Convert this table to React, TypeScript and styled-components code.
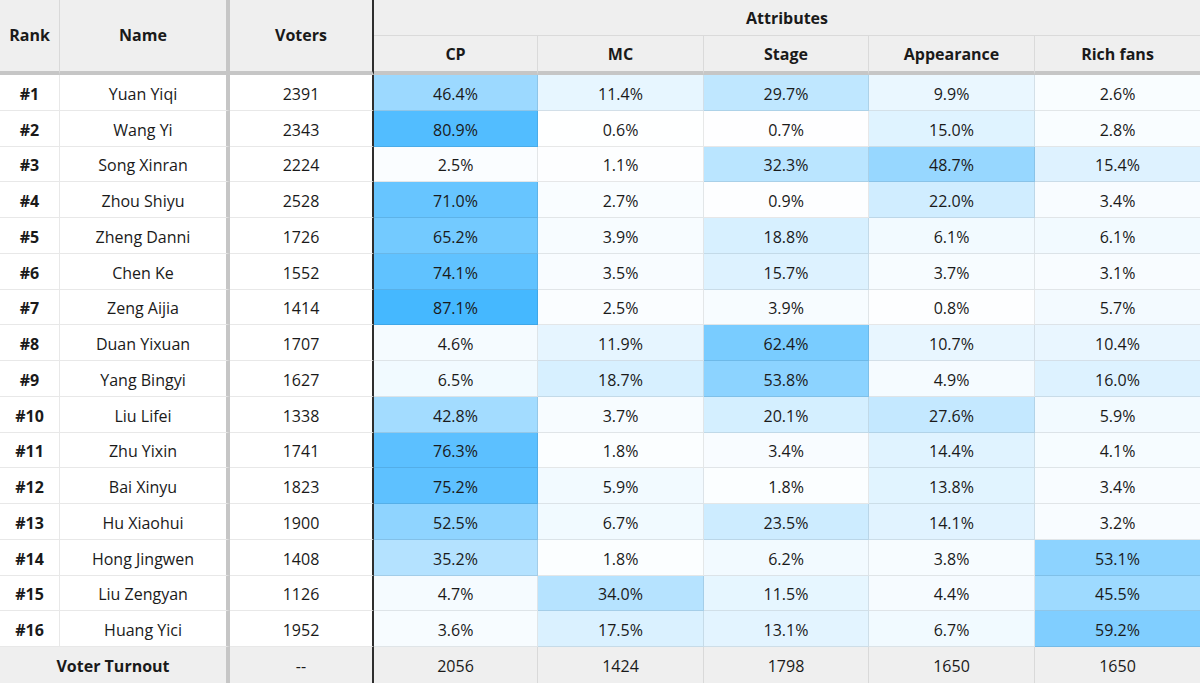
import React from "react";
import styled, { createGlobalStyle, css } from "styled-components";

const GlobalStyle = createGlobalStyle`
  html, body {
    margin: 0;
    padding: 0;
    background: #ffffff;
  }
  body {
    font-family: "Open Sans", "Noto Sans", "Liberation Sans", sans-serif;
    color: #1a1a1a;
  }
`;

const ROW_H = 35.75;

const Grid = styled.div`
  display: grid;
  width: 1200px;
  height: 683px;
  grid-template-columns: 60px 170px 144px 164px 166px 165px 166px 165px;
  grid-template-rows: 36px 39px repeat(16, ${ROW_H}px) 36px;
  font-size: 16px;
  overflow: hidden;
`;

type Edge = "thin" | "thick" | "dark" | "none";

const edgeRight = (e?: Edge) => {
  switch (e) {
    case "thick":
      return css`border-right: 4px solid #c6c6c6;`;
    case "dark":
      return css`border-right: 2px solid #2e2e2e;`;
    case "none":
      return css`border-right: none;`;
    default:
      return css`border-right: 1px solid rgba(0, 0, 0, 0.09);`;
  }
};

const Cell = styled.div<{ $edge?: Edge; $pct?: number }>`
  display: flex;
  align-items: center;
  justify-content: center;
  box-sizing: border-box;
  padding-top: 3px;
  border-bottom: 1px solid rgba(0, 0, 0, 0.09);
  white-space: nowrap;
  ${(p) => edgeRight(p.$edge)}
  ${(p) =>
    p.$pct !== undefined &&
    css`
      background: rgb(
        ${Math.round(255 - (p.$pct / 100) * 214)},
        ${Math.round(255 - (p.$pct / 100) * 82)},
        255
      );
    `}
`;

const HeadCell = styled(Cell)<{ $span?: number; $rows?: number }>`
  background: #efefef;
  font-weight: 700;
  padding-top: 0;
  border-bottom-color: #dadada;
  ${(p) => p.$span && css`grid-column: span ${p.$span};`}
  ${(p) =>
    p.$rows &&
    css`
      grid-row: span ${p.$rows};
    `}
`;

const SubHead = styled(HeadCell)`
  border-bottom: 4px solid #c6c6c6;
  border-right-color: #dadada;
`;

const MainHead = styled(HeadCell)`
  border-bottom: 4px solid #c6c6c6;
  padding-bottom: 2px;
`;

const RankCell = styled(Cell)`
  font-weight: 700;
`;

const Foot = styled(Cell)<{ $span?: number }>`
  background: #efefef;
  border-bottom: none;
  padding-top: 1px;
  ${(p) => p.$span && css`grid-column: span ${p.$span};`}
`;

const FootLabel = styled(Foot)`
  font-weight: 700;
`;

type Row = [string, number, number, number, number, number, number];

const rows: Row[] = [
  ["Yuan Yiqi", 2391, 46.4, 11.4, 29.7, 9.9, 2.6],
  ["Wang Yi", 2343, 80.9, 0.6, 0.7, 15.0, 2.8],
  ["Song Xinran", 2224, 2.5, 1.1, 32.3, 48.7, 15.4],
  ["Zhou Shiyu", 2528, 71.0, 2.7, 0.9, 22.0, 3.4],
  ["Zheng Danni", 1726, 65.2, 3.9, 18.8, 6.1, 6.1],
  ["Chen Ke", 1552, 74.1, 3.5, 15.7, 3.7, 3.1],
  ["Zeng Aijia", 1414, 87.1, 2.5, 3.9, 0.8, 5.7],
  ["Duan Yixuan", 1707, 4.6, 11.9, 62.4, 10.7, 10.4],
  ["Yang Bingyi", 1627, 6.5, 18.7, 53.8, 4.9, 16.0],
  ["Liu Lifei", 1338, 42.8, 3.7, 20.1, 27.6, 5.9],
  ["Zhu Yixin", 1741, 76.3, 1.8, 3.4, 14.4, 4.1],
  ["Bai Xinyu", 1823, 75.2, 5.9, 1.8, 13.8, 3.4],
  ["Hu Xiaohui", 1900, 52.5, 6.7, 23.5, 14.1, 3.2],
  ["Hong Jingwen", 1408, 35.2, 1.8, 6.2, 3.8, 53.1],
  ["Liu Zengyan", 1126, 4.7, 34.0, 11.5, 4.4, 45.5],
  ["Huang Yici", 1952, 3.6, 17.5, 13.1, 6.7, 59.2],
];

const attributes = ["CP", "MC", "Stage", "Appearance", "Rich fans"];
const turnout = [2056, 1424, 1798, 1650, 1650];

const App: React.FC = () => {
  return (
    <>
      <GlobalStyle />
      <Grid>
        <MainHead $rows={2}>Rank</MainHead>
        <MainHead $rows={2} $edge="thick">
          Name
        </MainHead>
        <MainHead $rows={2} $edge="dark">
          Voters
        </MainHead>
        <HeadCell $span={5} $edge="none">
          Attributes
        </HeadCell>
        {attributes.map((a, i) => (
          <SubHead key={a} $edge={i === attributes.length - 1 ? "none" : "thin"}>
            {a}
          </SubHead>
        ))}

        {rows.map((r, i) => (
          <React.Fragment key={r[0]}>
            <RankCell>#{i + 1}</RankCell>
            <Cell $edge="thick">{r[0]}</Cell>
            <Cell $edge="dark">{r[1]}</Cell>
            {r.slice(2).map((v, j) => (
              <Cell key={j} $pct={v as number} $edge={j === 4 ? "none" : "thin"}>
                {(v as number).toFixed(1)}%
              </Cell>
            ))}
          </React.Fragment>
        ))}

        <FootLabel $span={2} $edge="thick">
          Voter Turnout
        </FootLabel>
        <Foot $edge="dark">--</Foot>
        {turnout.map((t, i) => (
          <Foot key={i} $edge={i === 4 ? "none" : "thin"}>
            {t}
          </Foot>
        ))}
      </Grid>
    </>
  );
};

export default App;
